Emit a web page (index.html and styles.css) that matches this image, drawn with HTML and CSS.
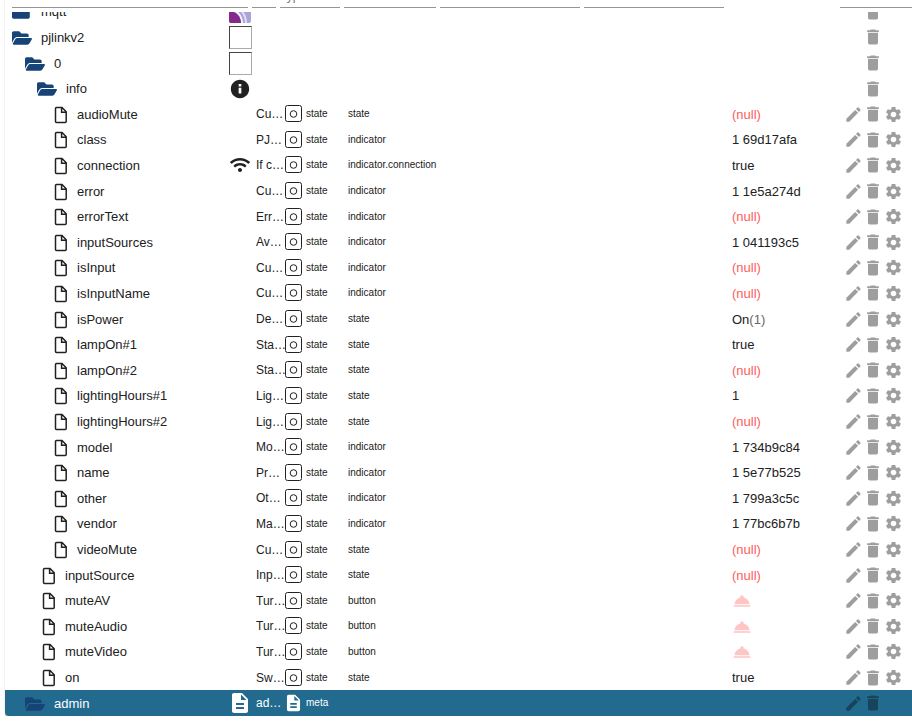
FILE: index.html
```html
<!DOCTYPE html>
<html lang="en">
<head>
<meta charset="utf-8">
<title>Objects</title>
<link rel="stylesheet" href="styles.css">
</head>
<body>
<svg class="sprite" aria-hidden="true">
  <symbol id="folder" viewBox="0 0 576 512"><path d="M572.694 292.093L500.27 416.248A63.997 63.997 0 0 1 444.989 448H45.025c-18.523 0-30.064-20.093-20.731-36.093l72.424-124.155A64 64 0 0 1 152 256h399.964c18.523 0 30.064 20.093 20.73 36.093zM152 224h328v-48c0-26.51-21.49-48-48-48H272l-64-64H48C21.49 64 0 85.49 0 112v278.046l69.077-118.418C86.214 242.25 117.989 224 152 224z"/></symbol>
  <symbol id="closed" viewBox="0 0 576 512"><path d="M464 128H272l-64-64H48C21.490 64 0 85.490 0 112v288c0 26.510 21.490 48 48 48h416c26.510 0 48-21.490 48-48V176c0-26.510-21.490-48-48-48z"/></symbol>
  <symbol id="file" viewBox="0 0 19 18"><path d="M7.500 1.500H13L17.200 5.700V15.500a1 1 0 0 1-1 1H7.500a1 1 0 0 1-1-1V2.500a1 1 0 0 1 1-1zM12.600 2v4.200h4.200" fill="none" stroke="currentColor" stroke-width="1.500"/></symbol>
  <symbol id="info" viewBox="0 0 24 24"><path d="M12 1C5.900 1 1 5.900 1 12s4.900 11 11 11 11-4.900 11-11S18.100 1 12 1zm1.600 16.500h-3.200V10.500h3.200zm0-8.500h-3.200V6h3.200z"/></symbol>
  <symbol id="wifi" viewBox="0 0 640 512"><path d="M634.910 154.880C457.740-8.990 182.190-8.930 5.090 154.880c-6.660 6.160-6.790 16.590-.35 22.980l34.240 33.970c6.140 6.100 16.020 6.230 22.400.38 145.920-133.680 371.300-133.710 517.250 0 6.380 5.850 16.260 5.710 22.400-.38l34.240-33.970c6.430-6.390 6.300-16.820-.36-22.980zM320 352c-35.350 0-64 28.650-64 64s28.650 64 64 64 64-28.650 64-64-28.650-64-64-64zm202.670-83.590c-115.260-101.930-290.210-101.820-405.340 0-6.900 6.100-7.120 16.690-.57 23.150l34.440 33.990c6 5.920 15.660 6.320 22.050.8 83.950-72.570 209.740-72.410 293.490 0 6.390 5.520 16.050 5.130 22.050-.8l34.440-33.990c6.560-6.460 6.330-17.060-.56-23.150z"/></symbol>
  <symbol id="doc" viewBox="3 1 18 22"><path d="M14 2H6c-1.100 0-2 .9-2 2v16c0 1.100.9 2 2 2h12c1.100 0 2-.9 2-2V8l-6-6zm2 16H8v-2h8v2zm0-4H8v-2h8v2zm-3-5V3.500L18.500 9H13z"/></symbol>
  <symbol id="state" viewBox="0 0 17 18"><rect x=".5" y=".5" width="16" height="16" rx="2" fill="none" stroke="currentColor"/><circle cx="8.500" cy="9" r="3.300" fill="none" stroke="currentColor"/></symbol>
  <symbol id="mqtt" viewBox="0 0 22 22"><rect width="22" height="22" rx="2" fill="#aaa5d8"/><path d="M0 3a19 19 0 0 1 18 19h-2A17 17 0 0 0 0 5z" fill="#e3e0f4"/><path d="M0 7a15 15 0 0 1 14 15h-2A13 13 0 0 0 0 9z" fill="#f4f2fb"/><path d="M0 10a12 12 0 0 1 12 12H2a2 2 0 0 1-2-2z" fill="#86298c"/></symbol>
  <symbol id="edit" viewBox="0 0 24 24"><path d="M3 17.250V21h3.750L17.810 9.940l-3.750-3.750L3 17.250zM20.710 7.040c.39-.39.39-1.020 0-1.410l-2.340-2.340c-.39-.39-1.020-.39-1.410 0l-1.830 1.830 3.750 3.750 1.830-1.830z"/></symbol>
  <symbol id="trash" viewBox="0 0 24 24"><path d="M6 19c0 1.100.9 2 2 2h8c1.100 0 2-.9 2-2V7H6v12zM19 4h-3.500l-1-1h-5l-1 1H5v2h14V4z"/></symbol>
  <symbol id="gear" viewBox="0 0 24 24"><path d="M19.140 12.940c.04-.3.06-.61.06-.94 0-.32-.02-.64-.07-.94l2.030-1.580c.18-.14.23-.41.12-.61l-1.920-3.320c-.12-.22-.37-.29-.59-.22l-2.390.96c-.5-.38-1.030-.7-1.620-.94l-.36-2.540c-.04-.24-.24-.41-.48-.41h-3.840c-.24 0-.43.17-.47.41l-.36 2.540c-.59.24-1.130.57-1.620.94l-2.390-.96c-.22-.08-.47 0-.59.22L2.740 8.870c-.12.21-.08.47.12.61l2.030 1.580c-.05.3-.09.63-.09.94s.02.64.07.94l-2.030 1.580c-.18.14-.23.41-.12.61l1.920 3.320c.12.22.37.29.59.22l2.390-.96c.5.38 1.030.7 1.620.94l.36 2.540c.05.24.24.41.48.41h3.840c.24 0 .44-.17.47-.41l.36-2.540c.59-.24 1.130-.56 1.620-.94l2.390.96c.22.08.47 0 .59-.22l1.920-3.320c.12-.22.07-.47-.12-.61l-2.010-1.580zM12 15.600c-1.980 0-3.600-1.620-3.600-3.600s1.620-3.600 3.600-3.600 3.600 1.620 3.600 3.600-1.620 3.600-3.600 3.600z"/></symbol>
  <symbol id="bell" viewBox="0 0 24 24"><path d="M2 17h20v2H2zm11.840-9.210c.1-.24.16-.51.16-.79 0-1.100-.9-2-2-2s-2 .9-2 2c0 .28.06.55.16.79C6.250 8.600 3.270 11.930 3 16h18c-.27-4.070-3.250-7.400-7.160-8.210z"/></symbol>
</svg>
<main class="card">
  <table class="objects">
    <thead><tr class="head"><th></th><th></th><th>Type</th><th></th><th></th><th></th><th></th></tr></thead>
    <tbody id="rows"></tbody>
  </table>
</main>
<script src="app.js"></script>
</body>
</html>
```
FILE: styles.css
```css
* { box-sizing: border-box; }
body {
  margin: 0;
  background: #fff;
  color: #212121;
  font: 13px/20px "Liberation Sans", Arial, sans-serif;
}
.sprite { display: none; }
svg { display: block; fill: currentColor; }
.card {
  height: calc(100vh - 5px);
  margin-left: 5px;
  overflow: hidden;
  border-radius: 0 0 0 4px;
  box-shadow: 0 1px 1px rgba(0, 0, 0, .4), 0 0 1px rgba(0, 0, 0, .15);
}
.objects { display: flex; flex-direction: column; height: 100%; }
thead { display: block; position: relative; z-index: 1; background: #fff; }
.head {
  display: grid;
  grid-template-columns: 236px 24px 60px 92px 140px minmax(0, 1fr) 72px;
  grid-template-rows: 8px;
  column-gap: 4px;
  padding: 0 0 4px 7px;
}
.head th {
  display: flex;
  align-items: flex-end;
  padding: 0;
  border-bottom: 1px solid #949494;
  color: #757575;
  font-size: 12px;
  font-weight: 400;
  line-height: 14px;
}
.head th:nth-child(3) { padding-bottom: 4px; }
.head th:nth-child(6) { margin-right: 112px; }
tbody { display: grid; flex: 1; grid-auto-rows: 1fr; margin-top: -13px; min-height: 0; }
.row {
  display: grid;
  grid-template-columns: 216px 24px 28px 60px minmax(0, 1fr) 111px 69px;
  align-items: center;
  min-height: 0;
  padding-left: 7px;
}
.row td { padding: 0; white-space: nowrap; }
.row .name { display: flex; align-items: center; gap: 9px; }
.row .name, .row .value { padding-top: 1px; }
.l1 .name { padding-left: 13px; }
.l2 .name { padding-left: 25px; }
.l3 .name { padding-left: 37px; }
.tree { width: 19px; height: 18px; flex: none; }
.tree.folder { width: 20px; color: #164477; }
.pic { display: flex; justify-content: center; }
.pic svg { width: 24px; height: 22px; }
.pic .info { height: 20px; }
.pic .wifi { width: 20px; height: 18px; }
.blank { width: 23px; height: 23px; border: 1px solid; border-color: #444 #aaa #aaa #444; }
.row .desc { padding-left: 4px; font-size: 12px; }
.row .type { display: flex; align-items: center; gap: 4px; padding-left: 5px; font-size: 10px; }
.type svg { width: 17px; height: 18px; }
.row .role { padding-left: 8px; font-size: 10px; }
.null { color: #ff5c5c; }
.code { color: #666; }
.bell { width: 20px; height: 20px; color: #ffc4c4; }
.actions { display: grid; grid-template-columns: 20px 20px 20px; }
.actions button {
  display: grid;
  place-items: center;
  width: 20px;
  height: 20px;
  padding: 0;
  border: 0;
  background: none;
  color: #9e9e9e;
}
.actions svg { width: 19px; height: 19px; }
.actions .trash svg { width: 20px; height: 20px; }
.actions .trash { grid-column: 2; }
.selected { background: #226b8f; color: #fff; }
.selected .actions button { color: #17445b; }
```
FILE: app.js
```javascript
// level, name, picture, description, role, value
const rows = [
  [0, "mqtt", "mqtt"],
  [0, "pjlinkv2", "blank"],
  [1, "0", "blank"],
  [2, "info", "info"],
  [3, "audioMute", "", "Cu…", "state", null],
  [3, "class", "", "PJ…", "indicator", "1 69d17afa"],
  [3, "connection", "wifi", "If c…", "indicator.connection", "true"],
  [3, "error", "", "Cu…", "indicator", "1 1e5a274d"],
  [3, "errorText", "", "Err…", "indicator", null],
  [3, "inputSources", "", "Av…", "indicator", "1 041193c5"],
  [3, "isInput", "", "Cu…", "indicator", null],
  [3, "isInputName", "", "Cu…", "indicator", null],
  [3, "isPower", "", "De…", "state", 'On<span class="code">(1)</span>'],
  [3, "lampOn#1", "", "Sta…", "state", "true"],
  [3, "lampOn#2", "", "Sta…", "state", null],
  [3, "lightingHours#1", "", "Lig…", "state", "1"],
  [3, "lightingHours#2", "", "Lig…", "state", null],
  [3, "model", "", "Mo…", "indicator", "1 734b9c84"],
  [3, "name", "", "Pr…", "indicator", "1 5e77b525"],
  [3, "other", "", "Ot…", "indicator", "1 799a3c5c"],
  [3, "vendor", "", "Ma…", "indicator", "1 77bc6b7b"],
  [3, "videoMute", "", "Cu…", "state", null],
  [2, "inputSource", "", "Inp…", "state", null],
  [2, "muteAV", "", "Tur…", "button", "bell"],
  [2, "muteAudio", "", "Tur…", "button", "bell"],
  [2, "muteVideo", "", "Tur…", "button", "bell"],
  [2, "on", "", "Sw…", "state", "true"],
  [1, "admin", "doc", "ad…", "", ""]
];
const icon = (id, cls) => `<svg class="${cls || id}"><use href="#${id}"/></svg>`;
const button = (id, label) => `<button class="${id}" aria-label="${label}">${icon(id, "glyph")}</button>`;

document.getElementById("rows").innerHTML = rows.map(([level, name, pic, desc, role, value]) => {
  const admin = name === "admin";
  const leaf = desc && !admin;
  const tree = leaf ? icon("file", "tree") : icon(name === "mqtt" ? "closed" : "folder", "tree folder");
  const picture = pic === "blank" ? '<span class="blank"></span>' : pic ? icon(pic) : "";
  const type = desc ? icon(admin ? "doc" : "state") + (admin ? "meta" : "state") : "";
  const shown = value === null ? '<span class="null">(null)</span>' : value === "bell" ? icon("bell") : value || "";
  return `<tr class="row l${level}${admin ? " selected" : ""}">
    <td class="name">${tree}${name}</td><td class="pic">${picture}</td><td class="desc">${desc || ""}</td>
    <td class="type">${type}</td><td class="role">${role || ""}</td><td class="value">${shown}</td>
    <td class="actions">${desc ? button("edit", "Edit") : ""}${button("trash", "Delete")}${leaf ? button("gear", "Settings") : ""}</td>
  </tr>`;
}).join("");
```
